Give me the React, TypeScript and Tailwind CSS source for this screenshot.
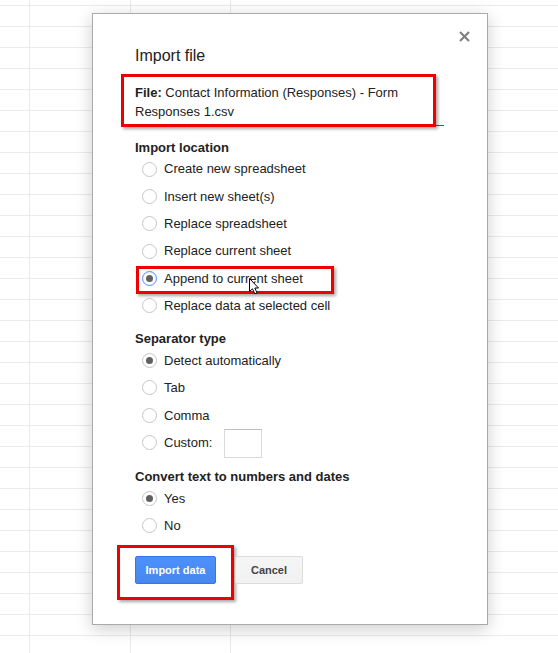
import React from "react";

const font = "font-['Liberation_Sans',Arial,sans-serif]";

function Radio({ checked, focused }: { checked?: boolean; focused?: boolean }) {
  return (
    <span
      className={
        focused
          ? "flex h-[15px] w-[15px] shrink-0 items-center justify-center rounded-full border border-[#4d90fe] bg-white shadow-[inset_0_1px_2px_rgba(0,0,0,0.1)]"
          : "flex h-[15px] w-[15px] shrink-0 items-center justify-center rounded-full border border-[#c6c6c6] bg-white"
      }
    >
      {checked && <span className="h-[7px] w-[7px] rounded-full bg-[#606060]" />}
    </span>
  );
}

function Option({
  label,
  checked,
  focused,
  children,
}: {
  label: string;
  checked?: boolean;
  focused?: boolean;
  children?: React.ReactNode;
}) {
  return (
    <div className="relative flex h-[27.33px] items-center">
      <span className="ml-[7px]">
        <Radio checked={checked} focused={focused} />
      </span>
      <span className="ml-[7px] whitespace-nowrap">{label}</span>
      {children}
    </div>
  );
}

function SectionTitle({ children, className }: { children: React.ReactNode; className: string }) {
  return <div className={"h-[16px] text-[13px] font-bold leading-[16px] " + className}>{children}</div>;
}

export default function App() {
  return (
    <div
      className={
        "relative h-[653px] w-[558px] overflow-hidden bg-white pl-[92px] pt-[13px] text-[13px] text-[#222] " +
        "bg-[image:linear-gradient(to_right,transparent_29px,#e9e9e9_29px,#e9e9e9_30px,transparent_30px,transparent_130px,#e9e9e9_130px,#e9e9e9_131px,transparent_131px,transparent_230px,#e9e9e9_230px,#e9e9e9_231px,transparent_231px),repeating-linear-gradient(to_bottom,transparent_0px,transparent_5px,#ebebeb_5px,#ebebeb_6px,transparent_6px,transparent_21px)] " +
        font
      }
    >
      <div className="flex h-[612px] w-[396px] flex-col border border-[#aaaaaa] bg-white shadow-[0_4px_16px_rgba(0,0,0,0.2)]">
        {/* close */}
        <div className="mt-[17px] flex h-[11px] justify-end pr-[17px]">
          <svg width="11" height="11" viewBox="0 0 11 11">
            <path d="M1 1 L10 10 M10 1 L1 10" stroke="#808080" strokeWidth="2.2" strokeLinecap="butt" />
          </svg>
        </div>

        <div className="flex flex-col pl-[42px]">
          <div className="mt-[4px] h-[20px] text-[16px] leading-[20px] text-[#222]">Import file</div>

          {/* file */}
          <div className="ml-[-14px] mt-[7.5px] flex items-end">
            <div className="relative z-10 w-[315px] border-[3px] border-[#ee0000] pb-[3px] pl-[11px] pt-[6.5px] leading-[19px] shadow-[2px_2px_3px_rgba(0,0,0,0.35)]">
              <span className="font-bold">File:</span> Contact Information (Responses) - Form
              <br />
              Responses 1.csv
            </div>
            <div className="mb-[1px] h-px w-[8px] bg-[#555]" />
          </div>

          <SectionTitle className="mt-[12.5px]">Import location</SectionTitle>
          <Option label="Create new spreadsheet" />
          <Option label="Insert new sheet(s)" />
          <Option label="Replace spreadsheet" />
          <Option label="Replace current sheet" />
          <Option label="Append to current sheet" checked focused>
            <div className="absolute left-[1px] top-[1.2px] h-[28px] w-[198px] border-[3px] border-[#ee0000] shadow-[2px_2px_3px_rgba(0,0,0,0.35)]" />
            <svg
              className="absolute left-[114px] top-[13px]"
              width="13"
              height="17"
              viewBox="0 0 13 17"
            >
              <path
                d="M0.5 0.5 L0.5 13.5 L3.5 10.8 L5.8 15.8 L8 14.8 L5.8 10 L9.5 10 Z"
                fill="#fff"
                stroke="#000"
                strokeWidth="1"
                strokeLinejoin="miter"
              />
            </svg>
          </Option>
          <Option label="Replace data at selected cell" />

          <SectionTitle className="mt-[11.5px]">Separator type</SectionTitle>
          <Option label="Detect automatically" checked />
          <Option label="Tab" />
          <Option label="Comma" />
          <Option label="Custom:">
            <div className="ml-[11.5px] mt-[1px] h-[29px] w-[38px] shrink-0 border border-[#d9d9d9] border-t-[#c0c0c0] bg-white" />
          </Option>

          <SectionTitle className="mt-[12.7px]">Convert text to numbers and dates</SectionTitle>
          <Option label="Yes" checked />
          <Option label="No" />

          {/* buttons */}
          <div className="ml-[-18px] mt-[5.8px] flex items-start">
            <div className="border-[3px] border-[#ee0000] pb-[13px] pl-[15px] pr-[15px] pt-[8px] shadow-[2px_2px_3px_rgba(0,0,0,0.35)]">
              <div className="flex h-[28px] w-[81px] items-center justify-center rounded-[2px] border border-[#3079ed] bg-[linear-gradient(to_bottom,#4d90fe,#4787ed)] text-[11px] font-bold text-white">
                Import data
              </div>
            </div>
            <div className="ml-[1px] mt-[11px] flex h-[28px] w-[68px] items-center justify-center rounded-[2px] border border-[#dcdcdc] bg-[linear-gradient(to_bottom,#f5f5f5,#f1f1f1)] text-[11px] font-bold text-[#444]">
              Cancel
            </div>
          </div>
        </div>
      </div>
    </div>
  );
}
